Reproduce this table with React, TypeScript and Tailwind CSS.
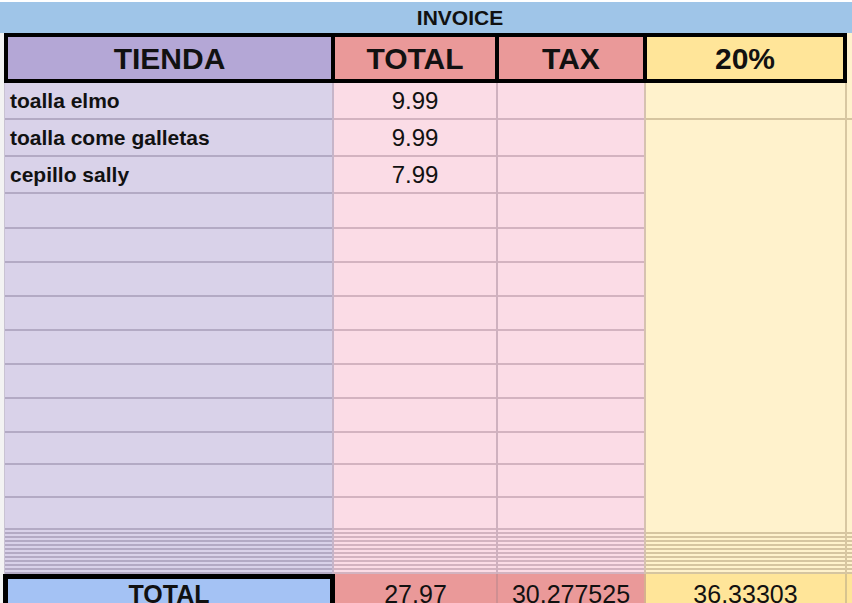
import React from "react";

const ROWS = [37, 37, 37, 35, 34, 34, 34, 34, 34, 34, 32, 33, 32];
const ITEMS = [
  { name: "toalla elmo", total: "9.99" },
  { name: "toalla come galletas", total: "9.99" },
  { name: "cepillo sally", total: "7.99" },
];
const BAND = Array.from({ length: 11 });

export default function App() {
  return (
    <div className="w-[852px] h-[603px] overflow-hidden bg-white text-[#111] font-['Liberation_Sans',Arial,sans-serif]">
      {/* title band */}
      <div className="h-[2px] bg-white" />
      <div className="h-[31px] bg-[#9fc5e8] flex items-center justify-center pl-[68px] text-[21px] font-bold leading-none">
        INVOICE
      </div>

      {/* header row */}
      <div className="flex h-[50px]">
        <div className="w-[4px] bg-[#f3f3f3]" />
        <div className="w-[843px] flex border-4 border-black text-[30px] font-bold">
          <div className="w-[323px] bg-[#b4a7d6] flex items-center justify-center">TIENDA</div>
          <div className="w-[160px] bg-[#ea9999] border-l-4 border-black flex items-center justify-center box-content">TOTAL</div>
          <div className="w-[144px] bg-[#ea9999] border-l-4 border-black flex items-center justify-center box-content">TAX</div>
          <div className="w-[196px] bg-[#ffe599] border-l-4 border-black flex items-center justify-center box-content">20%</div>
        </div>
        <div className="flex-1 bg-[#fff2cc]" />
      </div>

      {/* body */}
      <div className="flex">
        <div className="w-[4px] bg-[#f3f3f3]" />
        {/* tienda */}
        <div className="w-[330px] flex flex-col bg-[#d9d2e9] border-l border-r-2 border-l-[#c9c3d3] border-r-[#c6b5c9]">
          {ROWS.map((h, i) => (
            <div key={i} style={{ height: h }} className="border-b-2 border-[#b3aac4] flex items-center pl-[5px] text-[21px] font-bold">
              {ITEMS[i]?.name}
            </div>
          ))}
          {BAND.map((_, i) => (
            <div key={i} className="h-[4px] border-b-2 border-[#b3aac4]" />
          ))}
        </div>
        {/* total */}
        <div className="w-[164px] flex flex-col bg-[#fbdce6] border-r-2 border-[#cfb1bf]">
          {ROWS.map((h, i) => (
            <div key={i} style={{ height: h }} className="border-b-2 border-[#d3b3c0] flex items-center justify-center text-[24px]">
              {ITEMS[i]?.total}
            </div>
          ))}
          {BAND.map((_, i) => (
            <div key={i} className="h-[4px] border-b-2 border-[#d3b3c0]" />
          ))}
        </div>
        {/* tax */}
        <div className="w-[148px] flex flex-col bg-[#fbdce6] border-r-2 border-[#d6c2b0]">
          {ROWS.map((h, i) => (
            <div key={i} style={{ height: h }} className="border-b-2 border-[#d3b3c0]" />
          ))}
          {BAND.map((_, i) => (
            <div key={i} className="h-[4px] border-b-2 border-[#d3b3c0]" />
          ))}
        </div>
        {/* 20% merged */}
        <div className="w-[201px] flex flex-col bg-[#fff2cc] border-r-2 border-[#d8c7a2]">
          <div className="h-[37px] border-b-2 border-[#d6c5a0]" />
          <div className="h-[410px]" />
          {BAND.map((_, i) => (
            <div key={i} className="h-[4px] border-b-2 border-[#d6c5a0]" />
          ))}
        </div>
        <div className="flex-1 flex flex-col bg-[#fff2cc]">
          <div className="h-[37px] border-b-2 border-[#d6c5a0]" />
          <div className="h-[410px]" />
          {BAND.map((_, i) => (
            <div key={i} className="h-[4px] border-b-2 border-[#d6c5a0]" />
          ))}
        </div>
      </div>

      {/* total row */}
      <div className="flex h-[40px] text-[25px] leading-[28px]">
        <div className="w-[3px] bg-[#f3f3f3]" />
        <div className="w-[332px] bg-[#a4c2f4] border-[5px] border-b-0 border-black flex justify-center pt-[1px] font-bold">
          TOTAL
        </div>
        <div className="w-[163px] bg-[#ea9999] border-r-2 border-[#cf8f92] flex justify-center pt-[6px]">27.97</div>
        <div className="w-[148px] bg-[#ea9999] border-r-2 border-[#d7b08f] flex justify-center pt-[6px]">30.277525</div>
        <div className="w-[201px] bg-[#ffe599] border-r-2 border-[#d8c48f] flex justify-center pt-[6px]">36.33303</div>
        <div className="flex-1 bg-[#ffe599]" />
      </div>
    </div>
  );
}
